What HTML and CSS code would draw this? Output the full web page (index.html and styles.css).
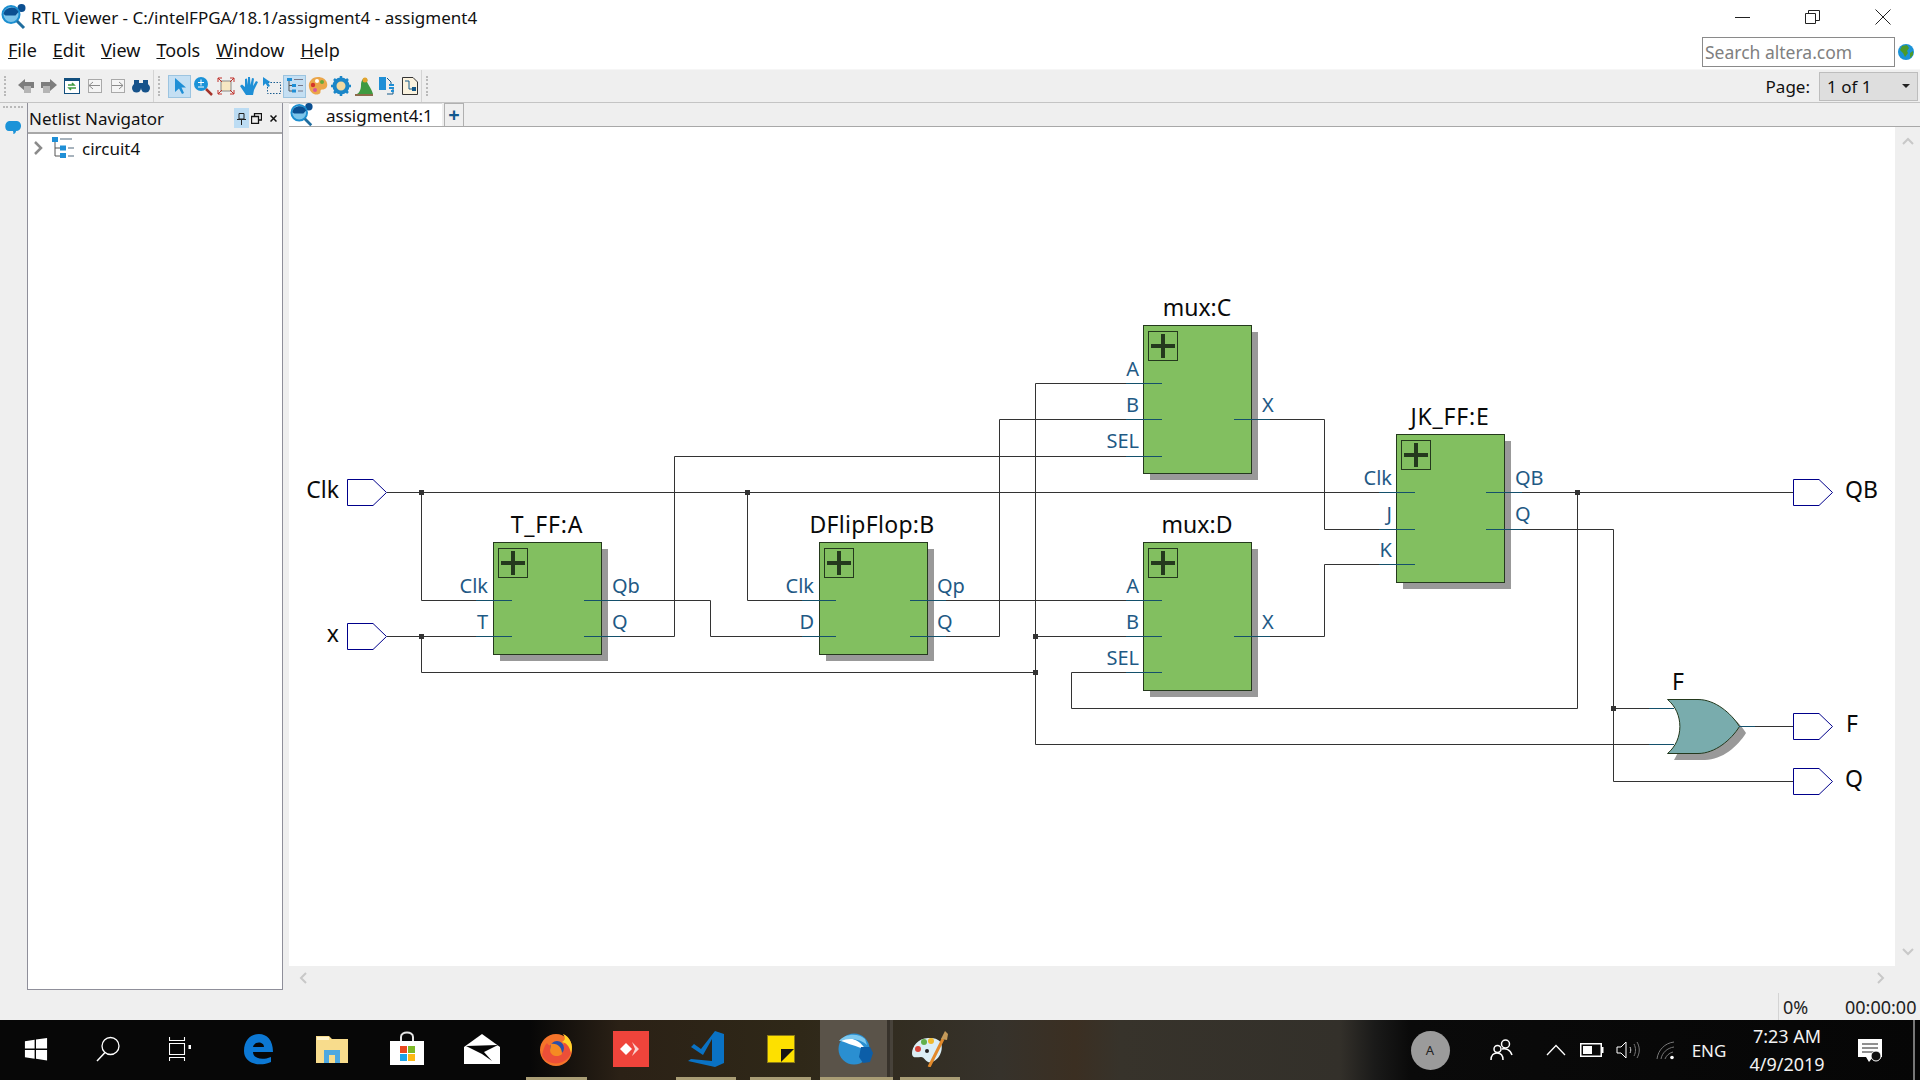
FILE: index.html
```html
<!DOCTYPE html>
<html lang="en">
<head>
  <meta charset="UTF-8">
  <title>RTL Viewer - C:/intelFPGA/18.1/assigment4 - assigment4</title>
  <link rel="stylesheet" href="styles.css">
</head>
<body>
  <svg class="defs" width="0" height="0">
    <defs>
      <symbol id="rtlLogo" viewBox="0 0 26 26">
        <circle cx="20.5" cy="4" r="4" fill="#0b4f91"/>
        <circle cx="10" cy="10.5" r="8.5" fill="#7cc4ea" stroke="#1b8ed0" stroke-width="2"/>
        <path d="M2.5 10a8 8 0 0 1 15 -2l-3 3.500h-10z" fill="#0b4f91"/>
        <path d="M16 17l7 7" stroke="#1f6d9f" stroke-width="3"/>
      </symbol>
      <g id="port"><path d="M0 -13H25.500L39 0L25.500 13H0Z"/></g>
      <g id="plus">
        <rect x="0.500" y="0.500" width="29" height="29" class="plus-box"/>
        <path d="M15 3V27M3 15H27" class="plus-mark"/>
      </g>
    </defs>
  </svg>

  <div class="app">
    <div class="titlebar">
      <svg class="title-logo" width="26" height="26"><use href="#rtlLogo"/></svg>
      <span class="title-text">RTL Viewer - C:/intelFPGA/18.1/assigment4 - assigment4</span>
      <div class="win-controls">
        <div class="win-btn"><svg width="16" height="16"><path d="M0 8.500H15" stroke="#222" fill="none"/></svg></div>
        <div class="win-btn"><svg width="16" height="16"><path d="M0.500 4.500H10.500V14.500H0.500ZM3.500 4V1.500H14.500V11.500H11" stroke="#222" fill="none"/></svg></div>
        <div class="win-btn"><svg width="16" height="16"><path d="M0.500 0.500L15.500 15.500M15.500 0.500L0.500 15.500" stroke="#222" fill="none"/></svg></div>
      </div>
    </div>

    <div class="menubar">
      <span><u>F</u>ile</span>
      <span><u>E</u>dit</span>
      <span><u>V</u>iew</span>
      <span><u>T</u>ools</span>
      <span><u>W</u>indow</span>
      <span><u>H</u>elp</span>
      <input class="search" type="text" placeholder="Search altera.com">
      <svg class="globe" width="16" height="16" viewBox="0 0 16 16">
        <circle cx="8" cy="8" r="8" fill="#1b93d8"/>
        <path d="M4 2l5 -1l2 3l-2 3l1 2l-3 4l-2 -4l-3 -3zM12 9l3 -2l0 4l-3 3z" fill="#4c9a2a"/>
      </svg>
    </div>

    <div class="toolbar">
      <div class="tool-group first">
        <i class="handle"></i>
        <div class="tool"><svg width="18" height="18" viewBox="0 0 18 18"><path d="M1 8L8 2V5H17V11H8V14Z" fill="#7d7d7d"/><rect x="7" y="9" width="7" height="7" fill="#b5b5b5"/></svg></div>
        <div class="tool"><svg width="18" height="18" viewBox="0 0 18 18"><path d="M17 8L10 2V5H1V11H10V14Z" fill="#7d7d7d"/><rect x="3" y="9" width="7" height="7" fill="#b5b5b5"/></svg></div>
        <div class="tool"><svg width="18" height="18" viewBox="0 0 18 18"><rect x="1.500" y="1.500" width="15" height="15" fill="#fff" stroke="#124f7e"/><rect x="1" y="1" width="16" height="3" fill="#124f7e"/><path d="M5 8h6l-2 -2M13 11h-7l2 2" stroke="#3f9b3f" fill="none" stroke-width="1.500"/></svg></div>
        <div class="tool"><svg width="18" height="18" viewBox="0 0 18 18"><rect x="2.500" y="2.500" width="13" height="13" fill="#f4f4f4" stroke="#a9a9a9"/><path d="M3 8.500H14M3 8.500L7 5M3 8.500L7 12" stroke="#8a8a8a" fill="none"/></svg></div>
        <div class="tool"><svg width="18" height="18" viewBox="0 0 18 18"><rect x="2.500" y="2.500" width="13" height="13" fill="#f4f4f4" stroke="#a9a9a9"/><path d="M3 8.500H14M14 8.500L10 5M14 8.500L10 12" stroke="#8a8a8a" fill="none"/></svg></div>
        <div class="tool"><svg width="18" height="18" viewBox="0 0 18 18"><circle cx="4.500" cy="11" r="4.500" fill="#16528a"/><circle cx="13.500" cy="11" r="4.500" fill="#16528a"/><rect x="2" y="3" width="5" height="7" fill="#16528a"/><rect x="11" y="3" width="5" height="7" fill="#16528a"/><rect x="7" y="6" width="4" height="5" fill="#16528a"/></svg></div>
      </div>
      <div class="tool-group second">
        <i class="handle"></i>
        <div class="tool on"><svg width="18" height="18" viewBox="0 0 18 18"><path d="M4 1V15L8 11.500L11 17L13 16L10.500 10.500H15Z" fill="#1f8fd6"/></svg></div>
        <div class="tool"><svg width="20" height="20" viewBox="0 0 20 20"><circle cx="8" cy="8" r="7" fill="#1b93d8"/><path d="M5 6.500H11M8 3.500V9.500M5 11H11" stroke="#fff"/><path d="M13 13L19 19" stroke="#a5332a" stroke-width="2.500"/></svg></div>
        <div class="tool"><svg width="18" height="18" viewBox="0 0 18 18"><rect x="4" y="4" width="10" height="10" fill="#f7e7c3" stroke="#888"/><path d="M1 5V1H5M13 1H17V5M17 13V17H13M5 17H1V13M1 1L5 5M17 1L13 5M17 17L13 13M1 17L5 13" stroke="#c0302a" fill="none"/></svg></div>
        <div class="tool"><svg width="20" height="20" viewBox="0 0 20 20"><path d="M7 19L1 10L3 8.500L6 11V3L8 2.500L9 9V1L11 1L11.500 9L13 2L15 2.500L14 10L17 5L19 6L15 14L14 19Z" fill="#1f8fd6"/></svg></div>
        <div class="tool"><svg width="20" height="20" viewBox="0 0 20 20"><rect x="5.500" y="6.500" width="13" height="11" fill="none" stroke="#1a5c8f" stroke-dasharray="1.500 1.500"/><path d="M1 1V10L3.500 7.500L6 11L8 10L6 6.500H9Z" fill="#1f8fd6"/></svg></div>
        <div class="tool on"><svg width="18" height="18" viewBox="0 0 18 18"><path d="M3 4V14H7M3 8.500H7" stroke="#555" fill="none"/><rect x="1" y="1" width="5" height="3" fill="#1f8fd6"/><rect x="6" y="7" width="4" height="3" fill="#1f8fd6"/><rect x="6" y="12.500" width="4" height="3" fill="#1f8fd6"/><path d="M8 2.500H17M12 8.500H17M12 14H17" stroke="#778"/></svg></div>
        <div class="tool"><svg width="20" height="20" viewBox="0 0 20 20"><path d="M10 1C4 1 0 6 1 11C2 17 7 20 11 18C14 17 11 14 14 13.500C18 13.500 20 11 19 7C18 3 14 1 10 1Z" fill="#eba64a"/><circle cx="5" cy="9" r="2.200" fill="#d4352c"/><circle cx="9" cy="5" r="2" fill="#fff"/><circle cx="14" cy="6" r="2" fill="#67a83d"/><circle cx="7" cy="14" r="2" fill="#d8559b"/></svg></div>
        <div class="tool"><svg width="20" height="20" viewBox="0 0 20 20"><circle cx="10" cy="10" r="6.500" fill="#f2d9a0" stroke="#1b86c8" stroke-width="4"/><path d="M10 0V3M10 17V20M0 10H3M17 10H20M3 3L5 5M15 15L17 17M17 3L15 5M5 15L3 17" stroke="#1b86c8" stroke-width="2.500"/></svg></div>
        <div class="tool"><svg width="20" height="20" viewBox="0 0 20 20"><path d="M3 18C5 17 7 14 7 9C7 5 9 2 11 2C13 2 14 4 13 6C15 10 18 14 19 18Z" fill="#3e9a40"/><circle cx="11" cy="4" r="2.500" fill="#e3a32c"/><path d="M1 18H19V20H1Z" fill="#8b6b4a"/></svg></div>
        <div class="tool"><svg width="20" height="20" viewBox="0 0 20 20"><path d="M2 1H9V14H2Z" fill="#1f8fd6"/><path d="M10 2L14 6V8M10 18H16V13" stroke="#155a8a" fill="none"/><path d="M12 9H17M12 12H17M14 15H17" stroke="#1f8fd6" stroke-width="2"/></svg></div>
        <div class="tool"><svg width="20" height="20" viewBox="0 0 20 20"><path d="M2.500 1.500H13L17.500 6V18.500H2.500Z" fill="#faf2de" stroke="#333"/><path d="M5 5H9V13H16" stroke="#155a8a" fill="none"/><rect x="12" y="11" width="4" height="4" fill="#155a8a"/></svg></div>
      </div>
      <i class="handle third"></i>
      <span class="page-label">Page:</span>
      <div class="page-combo"><span>1 of 1</span><b class="caret"></b></div>
    </div>

    <div class="main">
      <div class="dock-strip">
        <i class="dock-dots"></i>
        <svg width="16" height="14" viewBox="0 0 16 14"><path d="M4 0H12C18 1 17 10 11 10C11 11 10 13 8 13C9 12 8 11 8 10H4C-1 10 -1 1 4 0Z" fill="#1b93d8"/></svg>
      </div>

      <div class="panel">
        <div class="panel-head">
          <span class="panel-title">Netlist Navigator</span>
          <span class="pin"><svg width="11" height="13" viewBox="0 0 11 13"><path d="M3 1.500H8V7H3ZM1 7.500H10M5.500 8V13" stroke="#222" fill="none"/></svg></span>
          <svg class="float-icon" width="11" height="11" viewBox="0 0 11 11"><path d="M3.500 3V0.500H10.500V7H8M0.500 3.500H7.500V10.500H0.500Z" stroke="#111" fill="none" stroke-width="1.300"/></svg>
          <svg class="close-icon" width="7" height="7" viewBox="0 0 7 7"><path d="M0.500 0.500L6.500 6.500M6.500 0.500L0.500 6.500" stroke="#111" stroke-width="1.500"/></svg>
        </div>
        <div class="tree-row">
          <svg width="10" height="16" viewBox="0 0 10 16"><path d="M2 2L8 8L2 14" stroke="#8b8b8b" stroke-width="2.500" fill="none"/></svg>
          <svg class="tree-icon" width="24" height="24" viewBox="0 0 24 24"><path d="M4 5V20H10M4 12H10" stroke="#555" fill="none"/><rect x="1" y="1" width="6" height="5" fill="#1f8fd6"/><rect x="9" y="9.500" width="6" height="5" fill="#1f8fd6"/><rect x="9" y="17" width="6" height="5" fill="#1f8fd6"/><path d="M9 3H21M17 12H23M17 20H23" stroke="#8a9aa8" stroke-width="1.500"/></svg>
          <span>circuit4</span>
        </div>
      </div>

      <div class="central">
        <div class="tabs">
          <div class="tab">
            <svg width="24" height="24"><use href="#rtlLogo"/></svg>
            <span>assigment4:1</span>
          </div>
          <div class="tab-add">+</div>
        </div>

        <div class="canvas-row">
          <div class="canvas">
            <svg class="schematic" width="1606" height="839" viewBox="289 127 1606 839">
              <!-- drop shadows -->
              <g class="shadow">
                <rect x="500" y="549" width="108" height="112"/>
                <rect x="826" y="549" width="108" height="112"/>
                <rect x="1150" y="332" width="108" height="148"/>
                <rect x="1150" y="549" width="108" height="148"/>
                <rect x="1403" y="441" width="108" height="148"/>
                <path d="M1674 706H1705C1722 706 1738 720 1746 733C1738 746 1722 760 1705 760H1674C1684 745 1684 720 1674 706Z"/>
              </g>

              <!-- blocks -->
              <g class="block">
                <rect x="493.500" y="542.500" width="108" height="112"/>
                <rect x="819.500" y="542.500" width="108" height="112"/>
                <rect x="1143.500" y="325.500" width="108" height="148"/>
                <rect x="1143.500" y="542.500" width="108" height="148"/>
                <rect x="1396.500" y="434.500" width="108" height="148"/>
              </g>
              <use href="#plus" x="498" y="548"/>
              <use href="#plus" x="824" y="548"/>
              <use href="#plus" x="1148" y="331"/>
              <use href="#plus" x="1148" y="548"/>
              <use href="#plus" x="1401" y="440"/>
              <path class="or-gate" d="M1667.500 699.500H1698C1715 699.500 1731 713 1739.500 726.500C1731 740 1715 753.500 1698 753.500H1667.500C1684 740 1684 713 1667.500 699.500Z"/>

              <!-- nets -->
              <g class="wire">
                <path d="M387 492.500H1415"/>
                <path d="M421.500 492.500V600.500H512"/>
                <path d="M387 636.500H512"/>
                <path d="M421.500 636.500V672.500H1035.500"/>
                <path d="M584 600.500H710.500V636.500H836"/>
                <path d="M584 636.500H674.500V456.500H1162"/>
                <path d="M747.500 492.500V600.500H836"/>
                <path d="M910 600.500H1162"/>
                <path d="M910 636.500H999.500V419.500H1162"/>
                <path d="M1162 383.500H1035.500V744.500H1674"/>
                <path d="M1035.500 636.500H1162"/>
                <path d="M1234 419.500H1324.500V529.500H1415"/>
                <path d="M1234 636.500H1324.500V564.500H1415"/>
                <path d="M1486 492.500H1793"/>
                <path d="M1577.500 492.500V708.500H1071.500V672.500H1162"/>
                <path d="M1486 529.500H1613.500V781.500H1793"/>
                <path d="M1613.500 708.500H1674"/>
                <path d="M1739 726.500H1793"/>
              </g>
              <path class="stub" d="M476 600.500H512M476 636.500H512M584 600.500H620M584 636.500H620M802 600.500H836M802 636.500H836M910 600.500H946M910 636.500H946M1126 383.500H1162M1126 419.500H1162M1126 456.500H1162M1234 419.500H1270M1126 600.500H1162M1126 636.500H1162M1126 672.500H1162M1234 636.500H1270M1379 492.500H1415M1379 529.500H1415M1379 564.500H1415M1486 492.500H1522M1486 529.500H1522M1649 708.500H1674M1649 744.500H1674M1739 726.500H1755"/>
              <g class="junction">
                <rect x="419" y="490" width="5" height="5"/>
                <rect x="419" y="634" width="5" height="5"/>
                <rect x="745" y="490" width="5" height="5"/>
                <rect x="1033" y="634" width="5" height="5"/>
                <rect x="1033" y="670" width="5" height="5"/>
                <rect x="1575" y="490" width="5" height="5"/>
                <rect x="1611" y="706" width="5" height="5"/>
              </g>

              <!-- pins -->
              <g class="pin-shape">
                <use href="#port" x="347.500" y="492.500"/>
                <use href="#port" x="347.500" y="636.500"/>
                <use href="#port" x="1793.500" y="492.500"/>
                <use href="#port" x="1793.500" y="726.500"/>
                <use href="#port" x="1793.500" y="781.500"/>
              </g>

              <!-- names -->
              <g class="name">
                <text x="547" y="533" class="mid wide">T_FF:A</text>
                <text x="872" y="533" class="mid slight">DFlipFlop:B</text>
                <text x="1197" y="316" class="mid">mux:C</text>
                <text x="1197" y="533" class="mid">mux:D</text>
                <text x="1450" y="425" class="mid wide">JK_FF:E</text>
                <text x="1678" y="690" class="mid">F</text>
                <text x="339" y="498" class="end">Clk</text>
                <text x="339" y="642" class="end">x</text>
                <text x="1845" y="498">QB</text>
                <text x="1846" y="732">F</text>
                <text x="1845" y="787">Q</text>
              </g>

              <!-- port labels -->
              <g class="label">
                <text x="488" y="593" class="end">Clk</text>
                <text x="488" y="629" class="end">T</text>
                <text x="612" y="593">Qb</text>
                <text x="612" y="629">Q</text>
                <text x="814" y="593" class="end">Clk</text>
                <text x="814" y="629" class="end">D</text>
                <text x="937" y="593">Qp</text>
                <text x="937" y="629">Q</text>
                <text x="1139" y="376" class="end">A</text>
                <text x="1139" y="412" class="end">B</text>
                <text x="1139" y="448" class="end">SEL</text>
                <text x="1262" y="412">X</text>
                <text x="1139" y="593" class="end">A</text>
                <text x="1139" y="629" class="end">B</text>
                <text x="1139" y="665" class="end">SEL</text>
                <text x="1262" y="629">X</text>
                <text x="1392" y="485" class="end">Clk</text>
                <text x="1392" y="521" class="end">J</text>
                <text x="1392" y="557" class="end">K</text>
                <text x="1515" y="485">QB</text>
                <text x="1515" y="521">Q</text>
              </g>
            </svg>
          </div>
          <div class="vscroll">
            <svg width="12" height="8" viewBox="0 0 12 8"><path d="M1 7L6 2L11 7" stroke="#c8c8c8" stroke-width="2" fill="none"/></svg>
            <svg width="12" height="8" viewBox="0 0 12 8"><path d="M1 1L6 6L11 1" stroke="#c8c8c8" stroke-width="2" fill="none"/></svg>
          </div>
        </div>

        <div class="hscroll">
          <svg width="8" height="12" viewBox="0 0 8 12"><path d="M7 1L2 6L7 11" stroke="#c8c8c8" stroke-width="2" fill="none"/></svg>
          <svg width="8" height="12" viewBox="0 0 8 12"><path d="M1 1L6 6L1 11" stroke="#c8c8c8" stroke-width="2" fill="none"/></svg>
        </div>
        <div class="status">
          <span class="percent">0%</span>
          <span class="elapsed">00:00:00</span>
        </div>
      </div>
    </div>

    <div class="taskbar">
      <div class="task first"><svg width="24" height="24" viewBox="0 0 26 26"><path d="M1 4.500L11.500 3V12.500H1ZM13 2.800L25 1V12.500H13ZM1 14H11.500V23.500L1 22ZM13 14H25V25.500L13 23.500Z" fill="#fff"/></svg></div>
      <div class="task"><svg width="26" height="26" viewBox="0 0 26 26"><circle cx="15.500" cy="10" r="8.500" fill="none" stroke="#fff" stroke-width="1.300"/><path d="M10 16.500L2 25" stroke="#fff" stroke-width="1.500"/></svg></div>
      <div class="task"><svg class="task-view" width="22" height="24" viewBox="0 0 22 24"><path d="M0.500 0V3.500H15.500V0M0.500 24V20.500H15.500V24M0.500 6.500H15.500V17.500H0.500Z" fill="none" stroke="#fff" stroke-width="1.100"/><rect x="19.500" y="8" width="2.500" height="4" fill="#fff"/></svg></div>
      <div class="task"><svg width="36" height="36" viewBox="0 0 36 36"><path d="M4 20C4 9 11 3 19 3C27 3 33 9 33 21H13C13 27 21 30 31 26V31C20 36 4 33 4 20ZM13 16H24C24 10 14 10 13 16Z" fill="#0c78d4"/></svg></div>
      <div class="task"><svg width="36" height="36" viewBox="0 0 36 36"><path d="M2 5H15L18 8H34V32H2Z" fill="#f8dc8c"/><path d="M3 6H15V9H3Z" fill="#fff4cc"/><path d="M10 32V19H26V32H21V24H15V32Z" fill="#4ea8e0"/></svg></div>
      <div class="task"><svg width="36" height="36" viewBox="0 0 36 36"><path d="M12 11V6C12 0 24 0 24 6V11" stroke="#e5e5e5" stroke-width="2" fill="none"/><path d="M1 10H35V34H1Z" fill="#fff"/><rect x="11" y="15" width="7" height="7" fill="#e8481f"/><rect x="19" y="15" width="7" height="7" fill="#7db926"/><rect x="11" y="23" width="7" height="7" fill="#1ba3e8"/><rect x="19" y="23" width="7" height="7" fill="#fdb813"/></svg></div>
      <div class="task"><svg width="36" height="36" viewBox="0 0 36 36"><path d="M0 16L18 3L36 16V33H0Z" fill="#fff"/><path d="M2 15L34 14L20 21L28 30L18 23Z" fill="#050505"/></svg></div>
      <div class="task running"><svg width="36" height="36" viewBox="0 0 36 36"><circle cx="18" cy="19" r="16" fill="#f5742a"/><path d="M4 24C8 35 28 36 33 22C36 14 32 6 25 3C28 8 27 12 25 14C22 9 15 10 14 14C12 15 10 14 9 12C6 15 5 20 4 24Z" fill="#e8403f" opacity=".7"/><path d="M25 3C32 6 36 14 33 22C31 14 28 12 24 11C28 9 27 6 25 3Z" fill="#ffd42a"/><circle cx="19" cy="17" r="7" fill="#2a4fa8"/><path d="M13 13C20 12 24 17 24 23C20 27 12 25 12 19Z" fill="#f58a22"/></svg></div>
      <div class="task"><svg width="36" height="36" viewBox="0 0 36 36"><rect width="36" height="36" fill="#ef443b"/><path d="M7 18L13 12L19 18L13 24Z" fill="#fff"/><path d="M19 11L26 18L19 25L22 18Z" fill="#f9d2cf"/></svg></div>
      <div class="task running"><svg width="36" height="36" viewBox="0 0 36 36"><path d="M36 3V32L27 36L0 30L3 28L24 30V8L15 24L3 16L6 13L13 18L27 0Z" fill="#0a72c4"/></svg></div>
      <div class="task running"><svg width="28" height="28" viewBox="0 0 28 28"><rect x="0.500" y="0.500" width="27" height="27" fill="#fde000" stroke="#8a7a18"/><path d="M14 27V14H27Z" fill="#151515"/></svg></div>
      <div class="task active"><svg width="36" height="32" viewBox="0 0 36 32"><circle cx="17" cy="16" r="15.500" fill="#2a8fd1"/><path d="M4 8C12 2 24 8 28 16C20 14 10 10 4 8Z" fill="#fff"/><path d="M2 8C8 0 22 0 28 6L30 12C24 6 12 4 4 8Z" fill="#7cc8ef"/><path d="M24 14H33L36 20L33 29L26 30L22 24Z" fill="#0c5ea8"/></svg></div>
      <div class="task running"><svg width="36" height="36" viewBox="0 0 36 36"><path d="M16 7C6 7 0 16 0 22C0 28 5 26 9 26C13 26 14 33 20 31C30 28 33 12 26 9C23 7 20 7 16 7Z" fill="#dbeef5"/><circle cx="6" cy="18" r="3" fill="#d9443a"/><circle cx="12" cy="11" r="3" fill="#62b04a"/><circle cx="19" cy="10" r="3" fill="#f0b92d"/><circle cx="15" cy="20" r="2" fill="#222"/><path d="M17 36L31 8" stroke="#e2892a" stroke-width="3"/><path d="M29 8L33 0L36 3L35 9Z" fill="#c49a5a"/></svg></div>

      <div class="tray">
        <div class="tray-cell w60"><span class="avatar">A</span></div>
        <div class="tray-cell w84"><svg width="24" height="24" viewBox="0 0 24 24"><circle cx="15.500" cy="6" r="4" fill="none" stroke="#fff" stroke-width="1.500"/><circle cx="7.500" cy="11" r="3.500" fill="none" stroke="#fff" stroke-width="1.500"/><path d="M1 22C1 17 4 15 7 15C11 15 13 18 13 22M12 11C15 10 20 11 22 17" fill="none" stroke="#fff" stroke-width="1.500"/></svg></div>
        <div class="tray-cell w24"><svg width="20" height="12" viewBox="0 0 20 12"><path d="M1 11L10 1.500L19 11" fill="none" stroke="#fff" stroke-width="1.300"/></svg></div>
        <div class="tray-cell w48"><svg width="24" height="14" viewBox="0 0 24 14"><rect x="0.750" y="0.750" width="20.500" height="12.500" fill="none" stroke="#fff" stroke-width="1.500"/><rect x="3" y="3" width="9" height="8" fill="#fff"/><rect x="22" y="4" width="1.500" height="6" fill="#fff"/></svg></div>
        <div class="tray-cell w24"><svg width="24" height="18" viewBox="0 0 24 18"><path d="M1 6H5L10 1V17L5 12H1Z" fill="none" stroke="#fff"/><path d="M14 6C15 8 15 10 14 12" fill="none" stroke="#ccc"/><path d="M18 3C20 7 20 11 18 15M21 1C24 6 24 12 21 17" fill="none" stroke="#777"/></svg></div>
        <div class="tray-cell w52"><svg width="20" height="20" viewBox="0 0 20 20"><path d="M1 19C2 10 9 3 18 2M5 19C6 13 11 8 18 7M9 19C10 16 13 13 17 12" fill="none" stroke="#777"/><circle cx="16" cy="17.500" r="1.800" fill="#fff"/></svg></div>
        <div class="tray-cell w34 eng">ENG</div>
        <div class="tray-cell w122 clock"><span>7:23 AM</span><span>4/9/2019</span></div>
        <div class="tray-cell w44"><svg width="26" height="26" viewBox="0 0 26 26"><path d="M1 2H25V20H16L12 25L9 20H1Z" fill="#fff"/><path d="M5 7H21M5 11H21M5 15H17" stroke="#222"/><circle cx="19" cy="19" r="5" fill="#111" stroke="#fff"/></svg></div>
      </div>
    </div>
  </div>
</body>
</html>
```

FILE: styles.css
```css
html, body {
  margin: 0;
  padding: 0;
  height: 100%;
  overflow: hidden;
}

body {
  font-family: "Noto Sans", sans-serif;
  font-size: 17px;
  color: #111;
  background: #fff;
}

.defs {
  position: absolute;
}

.app {
  display: flex;
  flex-direction: column;
  width: 1920px;
  height: 1080px;
}

/* title + menu */
.titlebar {
  display: flex;
  align-items: center;
  height: 34px;
  padding-left: 1px;
  background: #fff;
}

.title-logo {
  margin-right: 4px;
}

.win-controls {
  display: flex;
  margin-left: auto;
  margin-right: 2px;
}

.win-btn {
  display: flex;
  align-items: center;
  justify-content: center;
  width: 70px;
  height: 34px;
}

.menubar {
  display: flex;
  align-items: center;
  gap: 16px;
  height: 35px;
  padding-left: 8px;
  padding-bottom: 4px;
  box-sizing: border-box;
  font-size: 18px;
  background: #fff;
}

.search {
  width: 193px;
  height: 30px;
  margin-left: auto;
  margin-right: -16px;
  padding: 0 2px;
  box-sizing: border-box;
  border: 1px solid #8a8a8a;
  font-family: inherit;
  font-size: 17.500px;
  position: relative;
  top: 2px;
}

.search::placeholder {
  color: #808080;
}

.globe {
  margin-left: 3px;
  margin-right: 6px;
  position: relative;
  top: 2px;
}

/* toolbar */
.toolbar {
  display: flex;
  align-items: center;
  border-top: 1px solid #f6f6f6;
  border-bottom: 1px solid #c4c4c4;
  box-sizing: border-box;
  height: 34px;
  background: #efefef;
}

.tool-group {
  display: flex;
  align-items: center;
  height: 100%;
  position: relative;
  border-right: 1px solid #d4d4d4;
  box-sizing: border-box;
}

.tool-group.first {
  width: 154px;
  padding-left: 14px;
}

.tool-group.second {
  width: 268px;
  padding-left: 14px;
}

.handle {
  position: absolute;
  left: 4px;
  top: 6px;
  bottom: 6px;
  width: 2px;
  border-left: 2px dotted #b9b9b9;
}

.handle.third {
  position: static;
  height: 20px;
  margin-left: 4px;
}

.tool {
  display: flex;
  align-items: center;
  justify-content: center;
  width: 23px;
  height: 23px;
  box-sizing: border-box;
}

.tool.on {
  background: #c4dff3;
  border: 1px solid #9cc4e0;
}

.page-label {
  margin-left: auto;
  margin-right: 9px;
}

.page-combo {
  display: flex;
  align-items: center;
  justify-content: space-between;
  width: 99px;
  height: 29px;
  margin-right: 2px;
  padding: 0 7px;
  box-sizing: border-box;
  border: 1px solid #bdbdbd;
  background: #dedede;
}

.caret {
  border-left: 4px solid transparent;
  border-right: 4px solid transparent;
  border-top: 4px solid #222;
}

/* main area */
.main {
  display: flex;
  flex: 1;
  min-height: 0;
  background: #efefef;
}

.dock-strip {
  display: flex;
  flex-direction: column;
  align-items: center;
  width: 27px;
  padding-top: 3px;
  padding-right: 2px;
  box-sizing: border-box;
}

.dock-dots {
  width: 20px;
  border-top: 2px dotted #b9b9b9;
  margin-bottom: 13px;
}

.panel {
  display: flex;
  flex-direction: column;
  width: 256px;
  margin-bottom: 30px;
  box-sizing: border-box;
  border-left: 1px solid #8f8f9a;
  border-right: 1px solid #8f8f9a;
  border-bottom: 1px solid #8f8f9a;
  background: #fff;
}

.panel-head {
  display: flex;
  align-items: center;
  height: 31px;
  padding: 1px 5px 0 1px;
  box-sizing: border-box;
  border-bottom: 2px solid #a8a8a8;
  background: #efefef;
}

.pin {
  display: flex;
  align-items: center;
  justify-content: center;
  width: 15px;
  height: 20px;
  margin-left: auto;
  background: #bcdcf3;
}

.float-icon {
  margin-left: 2px;
}

.close-icon {
  margin-left: 8px;
}

.tree-row {
  display: flex;
  align-items: center;
  height: 28px;
  padding-left: 5px;
}

.tree-icon {
  margin-left: 8px;
  margin-right: 7px;
}

.central {
  display: flex;
  flex-direction: column;
  flex: 1;
  min-width: 0;
  margin-left: 6px;
}

.tabs {
  display: flex;
  height: 24px;
  border-bottom: 1px solid #a8a8a8;
  box-sizing: border-box;
}

.tab {
  display: flex;
  align-items: center;
  width: 153px;
  padding-left: 1px;
  box-sizing: border-box;
  background: #fff;
  border-top: 1px solid #dcdcdc;
}

.tab span {
  margin-left: 12px;
}

.tab-add {
  display: flex;
  align-items: center;
  justify-content: center;
  width: 20px;
  margin-left: 2px;
  box-sizing: border-box;
  border: 1px solid #b0b0b0;
  border-bottom: 0;
  color: #12598f;
  font-size: 20px;
  font-weight: 700;
  line-height: 1;
}

.canvas-row {
  display: flex;
  flex: 1;
  min-height: 0;
}

.canvas {
  flex: 1;
  min-width: 0;
  background: #fff;
}

.schematic {
  display: block;
}

.vscroll {
  display: flex;
  flex-direction: column;
  align-items: center;
  justify-content: space-between;
  width: 25px;
  padding: 10px 0;
  box-sizing: border-box;
}

.hscroll {
  display: flex;
  align-items: center;
  justify-content: space-between;
  height: 24px;
  padding: 0 35px 0 10px;
  box-sizing: border-box;
}

.status {
  display: flex;
  align-items: flex-start;
  justify-content: flex-end;
  height: 30px;
  font-size: 18px;
  line-height: 28px;
  color: #222;
}

.percent {
  width: 67px;
  height: 27px;
  margin-top: 3px;
  padding-left: 4px;
  box-sizing: border-box;
  border-left: 1px solid #d4d4d4;
}

.elapsed {
  width: 75px;
  margin-top: 3px;
  white-space: nowrap;
}

/* schematic */
.shadow {
  fill: #999;
}

.block rect {
  fill: #82bf60;
  stroke: #24391d;
}

.plus-box {
  fill: none;
  stroke: #24391d;
}

.plus-mark {
  fill: none;
  stroke: #24391d;
  stroke-width: 4;
}

.or-gate {
  fill: #79acad;
  stroke: #24391d;
}

.wire path {
  fill: none;
  stroke: #333;
  stroke-width: 1;
}

.stub {
  fill: none;
  stroke: #14506b;
  stroke-width: 1;
}

.junction {
  fill: #333;
}

.pin-shape {
  fill: #fff;
  stroke: #00008b;
  stroke-width: 1;
}

.name {
  font-size: 23px;
  fill: #0a0a0a;
}

.label {
  font-size: 20px;
  fill: #1f5a85;
}

.mid {
  text-anchor: middle;
}

.end {
  text-anchor: end;
}

.wide {
  letter-spacing: 0.800px;
}

.slight {
  letter-spacing: 0.300px;
}

/* taskbar */
.taskbar {
  display: flex;
  align-items: center;
  height: 60px;
  box-sizing: border-box;
  background: linear-gradient(90deg, #070707 0, #070707 530px, #2b2116 620px, #2f2818 800px, #36322b 1000px, #3b2f22 1075px, #37332b 1120px, #33302a 1340px, #1a1a19 1375px, #0a0a0a 1410px, #060606 100%);
}

.task {
  position: relative;
  display: flex;
  align-items: center;
  justify-content: center;
  width: 74.700px;
  height: 60px;
  padding-bottom: 2px;
  box-sizing: border-box;
  flex-shrink: 0;
}

.task.first {
  width: 71px;
}

.task-view {
  margin-right: 7px;
}

.task.running::after,
.task.active::after {
  content: "";
  position: absolute;
  left: 7px;
  right: 7px;
  bottom: 0;
  height: 3px;
  background: #a99d75;
}

.task.active {
  background: linear-gradient(90deg, transparent 2px, #5a5349 2px, #5a5349 69px, #37322b 69px, #37322b 72px, #47423a 72px);
}

.task.active::after {
  left: 2px;
  right: 0;
}

.tray {
  display: flex;
  align-items: center;
  height: 60px;
  margin-left: auto;
  padding-right: 28px;
  position: relative;
  color: #f2f2f2;
}

.tray::after {
  content: "";
  position: absolute;
  right: 5px;
  top: 0;
  bottom: 0;
  width: 2px;
  background: #777;
}

.tray-cell {
  display: flex;
  align-items: center;
  justify-content: center;
  height: 60px;
  flex-shrink: 0;
}

.w24 { width: 24px; }
.w34 { width: 34px; }
.w44 { width: 44px; }
.w48 { width: 48px; }
.w52 { width: 52px; }
.w60 { width: 60px; }
.w84 { width: 84px; }
.w122 { width: 122px; }

.avatar {
  display: flex;
  align-items: center;
  justify-content: center;
  width: 39px;
  height: 39px;
  border-radius: 50%;
  background: #9b9b9b;
  color: #222;
  font-size: 13px;
}

.eng {
  font-size: 17px;
}

.clock {
  flex-direction: column;
  font-size: 18px;
  line-height: 28px;
}
```
